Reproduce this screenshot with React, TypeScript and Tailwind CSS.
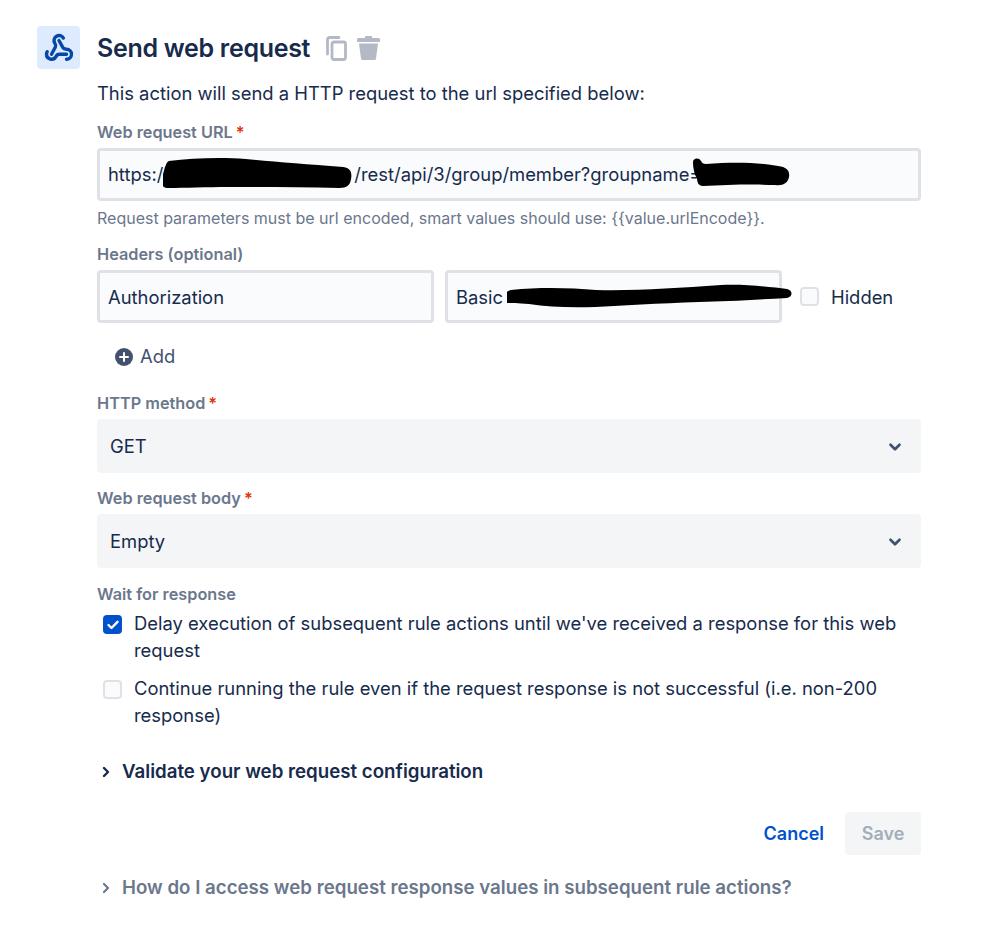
import { ChevronDown, ChevronRight, Webhook } from "lucide-react";

// Black marker scribbles drawn over the secrets in the inputs
const Scribble = ({ className, d, w, h, shownW }: { className: string; d: string; w: number; h: number; shownW?: number }) => (
  <svg className={`absolute ${className}`} width={shownW ?? w} height={h} viewBox={`0 0 ${w} ${h}`} preserveAspectRatio="none">
    <path d={d} fill="#000" />
  </svg>
);

const Label = ({ text, required }: { text: string; required?: boolean }) => (
  <div className="text-[16.3px] leading-[20px] font-semibold text-[#6b778c]">
    {text}
    {required && <span className="text-[#de350b] ml-[3px]">*</span>}
  </div>
);

const Select = ({ value }: { value: string }) => (
  <div className="h-[54px] mt-[6px] bg-[#f4f5f7] rounded-[4px] flex items-center justify-between pt-[2px] pl-[13px] pr-[17px] text-[18.4px] text-[#172b4d]">
    <span>{value}</span>
    <ChevronDown size={18} strokeWidth={3.6} className="text-[#42526e]" />
  </div>
);

const Checkbox = ({ checked }: { checked?: boolean }) =>
  checked ? (
    <div className="w-[19px] h-[19px] rounded-[4px] bg-[#0052cc] flex items-center justify-center shrink-0">
      <svg width="12" height="10" viewBox="0 0 12 10">
        <path d="M1.5 5l3 3 6-6.2" fill="none" stroke="#fff" strokeWidth="2.4" strokeLinecap="round" strokeLinejoin="round" />
      </svg>
    </div>
  ) : (
    <div className="w-[19px] h-[19px] rounded-[4px] bg-[#fafbfc] border-2 border-[#dfe1e6] shrink-0" />
  );

export default function App() {
  return (
    <div className="w-[999px] h-[927px] bg-white font-['Inter',sans-serif] text-[#172b4d] flex pl-[37px] pt-[26px] overflow-hidden">
      <div className="w-[43px] h-[43px] rounded-[4px] bg-[#deebff] flex items-center justify-center shrink-0">
        <Webhook size={30} strokeWidth={2.7} color="#0747a6" />
      </div>

      <div className="ml-[17px] w-[824px]">
        <div className="h-[44px] flex items-center">
          <h1 className="text-[25px] leading-[44px] font-semibold tracking-[-0.3px]">Send web request</h1>
          <svg className="ml-[16px]" width="21" height="25" viewBox="0 0 21 25" fill="none" stroke="#b3bac5" strokeWidth="2.8">
            <path d="M1.500 18V3.500A2 2 0 0 1 3.500 1.500H13" strokeLinecap="round" />
            <rect x="6" y="6" width="13.500" height="17.500" rx="2" />
          </svg>
          <svg className="ml-[10px]" width="23" height="24" viewBox="0 0 23 24" fill="#b3bac5">
            <path d="M8 1c0-.6.5-1 1-1h5c.5 0 1 .4 1 1v1h6.500c.8 0 1.500.7 1.500 1.500V6H0V3.500C0 2.700.7 2 1.500 2H8zM2 7.500h19L19 22.500a1.500 1.500 0 0 1-1.500 1.500h-12A1.500 1.500 0 0 1 4 22.500z" />
          </svg>
        </div>

        <p className="mt-[9px] text-[18.4px] leading-[28px]">This action will send a HTTP request to the url specified below:</p>

        <div className="mt-[15px]">
          <Label text="Web request URL" required />
        </div>
        <div className="relative mt-[6px] h-[53px] border-[3px] border-[#dfe1e6] rounded-[4px] bg-[#fafbfc] flex items-center pl-[8px] text-[18.4px]">
          <span>https:/</span>
          <span className="w-[191px] shrink-0" />
          <span>/rest/api/3/group/member?groupname=</span>
          <Scribble className="left-[63px] top-[6px]" w={196} shownW={191} h={32} d="M6 4C30 1 60 0 85 2c30 3 60 5 100 8 8 1 9 6 8 12-1 6-4 9-12 9-40-1-80-1-115-1-20 0-45 1-60 1-6 0-8-3-8-8C1 16 2 6 6 4z" />
          <Scribble className="left-[591px] top-[6px]" w={100} h={30} d="M2 5c0-4 6-5 8-1 1 2 2 3 5 3 25-2 50-2 72 2 9 1 12 5 11 11-1 6-6 9-14 8-25-1-50 0-72 1-4 0-6-3-6-8-2-2-4-9-4-16z" />
        </div>

        <p className="mt-[7px] text-[16px] leading-[20px] text-[#6b778c]">Request parameters must be url encoded, smart values should use: {"{{value.urlEncode}}"}.</p>

        <div className="mt-[16px]">
          <Label text="Headers (optional)" />
        </div>
        <div className="mt-[6px] flex items-center">
          <div className="w-[337px] h-[53px] border-[3px] border-[#dfe1e6] rounded-[4px] bg-[#fafbfc] flex items-center pt-[2px] pl-[8px] text-[18.4px]">Authorization</div>
          <div className="relative ml-[11px] w-[337px] h-[53px] border-[3px] border-[#dfe1e6] rounded-[4px] bg-[#fafbfc] flex items-center pt-[2px] pl-[8px] text-[18.4px]">
            Basic
            <Scribble className="left-[59px] top-[11px]" w={285} h={26} d="M4 6c30-3 60-2 85 0 40 1 80-2 125-5 25-1 50 2 66 4 6 1 6 8 0 9-20 1-40 2-58 3-40 1-80 3-115 5-30 2-60 2-85-2-15-1-22-1-22-1-4 0-4-12 4-13z" />
          </div>
          <div className="ml-[18px]">
            <Checkbox />
          </div>
          <span className="ml-[12px] pt-[2px] text-[18.4px]">Hidden</span>
        </div>

        <div className="mt-[22px] ml-[18px] h-[24px] flex items-center text-[18.4px] text-[#42526e]">
          <svg width="18" height="18" viewBox="0 0 18 18">
            <circle cx="9" cy="9" r="9" fill="#42526e" />
            <path d="M9 5v8M5 9h8" stroke="#fff" strokeWidth="2" strokeLinecap="round" />
          </svg>
          <span className="ml-[7px]">Add</span>
        </div>

        <div className="mt-[24px]">
          <Label text="HTTP method" required />
        </div>
        <Select value="GET" />

        <div className="mt-[15px]">
          <Label text="Web request body" required />
        </div>
        <Select value="Empty" />

        <div className="mt-[16px]">
          <Label text="Wait for response" />
        </div>

        <div className="mt-[6px] ml-[6px] flex items-start gap-[12px] text-[18.4px] leading-[27px]">
          <div className="mt-[5px]">
            <Checkbox checked />
          </div>
          <span>Delay execution of subsequent rule actions until we've received a response for this web request</span>
        </div>
        <div className="mt-[11px] ml-[6px] flex items-start gap-[12px] text-[18.4px] leading-[27px]">
          <div className="mt-[5px]">
            <Checkbox />
          </div>
          <span>Continue running the rule even if the request response is not successful (i.e. non-200 response)</span>
        </div>

        <div className="mt-[29px] flex items-center h-[28px] text-[18.7px] font-semibold">
          <ChevronRight size={16} strokeWidth={3.6} className="ml-[1px] text-[#172b4d]" />
          <span className="ml-[8px]">Validate your web request configuration</span>
        </div>

        <div className="mt-[26px] flex items-center justify-end">
          <span className="text-[18px] font-semibold text-[#0052cc]">Cancel</span>
          <div className="ml-[21px] w-[76px] h-[43px] rounded-[4px] bg-[#f4f5f7] flex items-center justify-center text-[18px] font-semibold text-[#a5adba]">Save</div>
        </div>

        <div className="mt-[19px] flex items-center h-[28px] text-[18.7px] font-semibold text-[#6b778c]">
          <ChevronRight size={16} strokeWidth={3.2} className="ml-[1px]" />
          <span className="ml-[8px]">How do I access web request response values in subsequent rule actions?</span>
        </div>
      </div>
    </div>
  );
}
